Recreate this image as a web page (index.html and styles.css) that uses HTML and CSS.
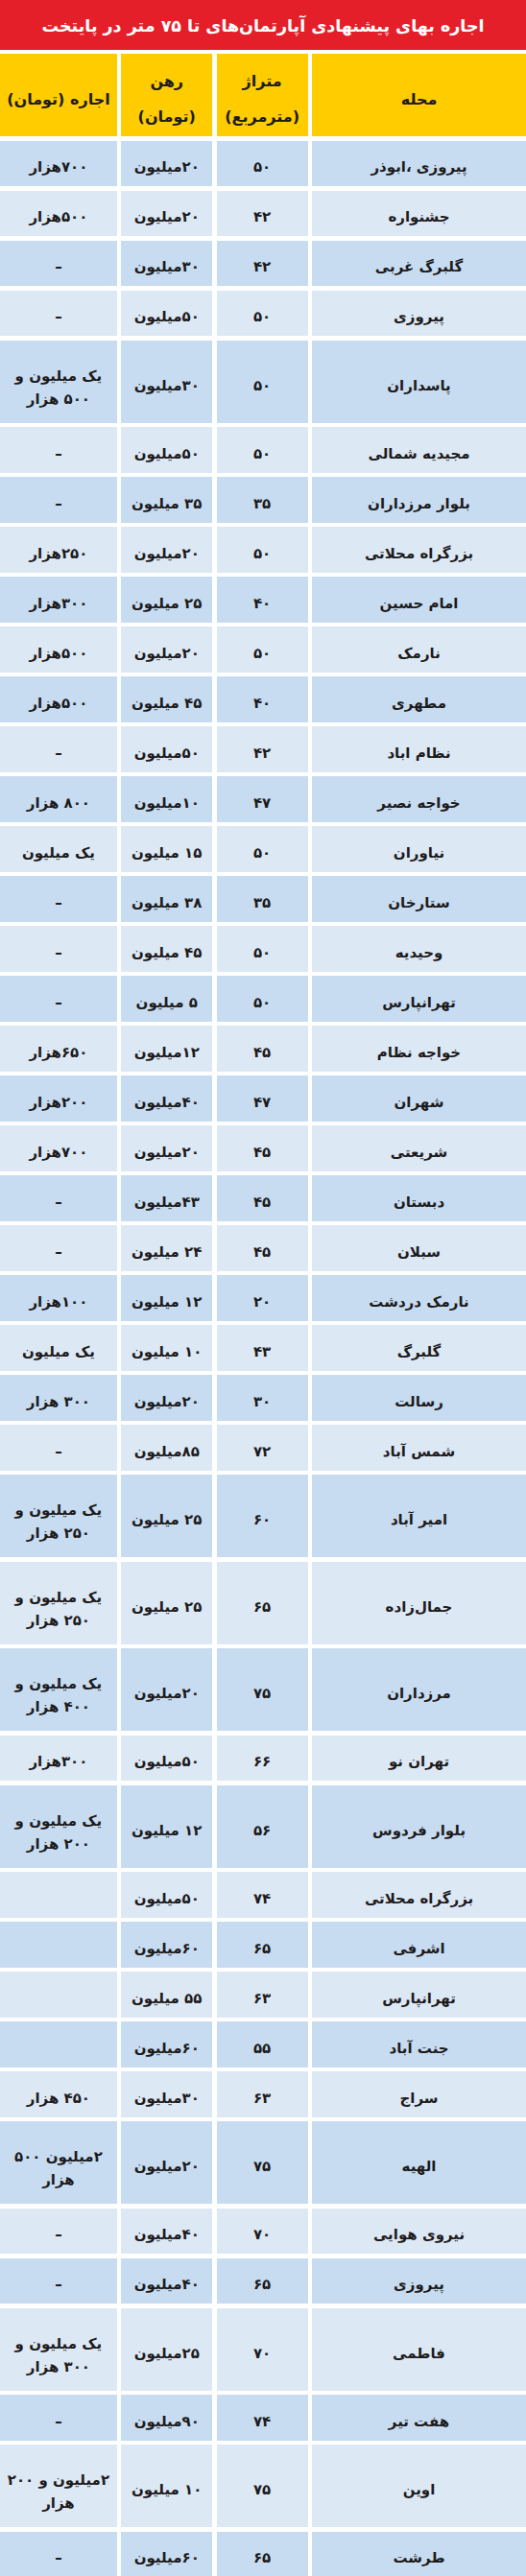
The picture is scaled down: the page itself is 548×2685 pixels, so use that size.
FILE: index.html
```html
<!DOCTYPE html>
<html lang="fa" dir="rtl">
<head>
<meta charset="utf-8">
<title>اجاره بهای پیشنهادی آپارتمان‌های تا ۷۵ متر در پایتخت</title>
<link rel="stylesheet" href="styles.css">
</head>
<body>
<div class="sheet">
  <h1 class="title">اجاره بهای پیشنهادی آپارتمان‌های تا ۷۵ متر در پایتخت</h1>
  <div class="head">
    <div class="hcell">محله</div>
    <div class="hcell">متراژ<br>(مترمربع)</div>
    <div class="hcell">رهن<br>(تومان)</div>
    <div class="hcell">اجاره (تومان)</div>
  </div>
  <div class="rows">
    <div class="row"><div class="cell">پیروزی ،ابوذر</div><div class="cell">۵۰</div><div class="cell">۲۰میلیون</div><div class="cell">۷۰۰هزار</div></div>
    <div class="row"><div class="cell">جشنواره</div><div class="cell">۴۲</div><div class="cell">۲۰میلیون</div><div class="cell">۵۰۰هزار</div></div>
    <div class="row"><div class="cell">گلبرگ غربی</div><div class="cell">۴۲</div><div class="cell">۳۰میلیون</div><div class="cell">–</div></div>
    <div class="row"><div class="cell">پیروزی</div><div class="cell">۵۰</div><div class="cell">۵۰میلیون</div><div class="cell">–</div></div>
    <div class="row tall"><div class="cell">پاسداران</div><div class="cell">۵۰</div><div class="cell">۳۰میلیون</div><div class="cell">یک میلیون و<br>۵۰۰ هزار</div></div>
    <div class="row"><div class="cell">مجیدیه شمالی</div><div class="cell">۵۰</div><div class="cell">۵۰میلیون</div><div class="cell">–</div></div>
    <div class="row"><div class="cell">بلوار مرزداران</div><div class="cell">۳۵</div><div class="cell">۳۵ میلیون</div><div class="cell">–</div></div>
    <div class="row"><div class="cell">بزرگراه محلاتی</div><div class="cell">۵۰</div><div class="cell">۲۰میلیون</div><div class="cell">۲۵۰هزار</div></div>
    <div class="row"><div class="cell">امام حسین</div><div class="cell">۴۰</div><div class="cell">۲۵ میلیون</div><div class="cell">۳۰۰هزار</div></div>
    <div class="row"><div class="cell">نارمک</div><div class="cell">۵۰</div><div class="cell">۲۰میلیون</div><div class="cell">۵۰۰هزار</div></div>
    <div class="row"><div class="cell">مطهری</div><div class="cell">۴۰</div><div class="cell">۴۵ میلیون</div><div class="cell">۵۰۰هزار</div></div>
    <div class="row"><div class="cell">نظام اباد</div><div class="cell">۴۲</div><div class="cell">۵۰میلیون</div><div class="cell">–</div></div>
    <div class="row"><div class="cell">خواجه نصیر</div><div class="cell">۴۷</div><div class="cell">۱۰میلیون</div><div class="cell">۸۰۰ هزار</div></div>
    <div class="row"><div class="cell">نیاوران</div><div class="cell">۵۰</div><div class="cell">۱۵ میلیون</div><div class="cell">یک میلیون</div></div>
    <div class="row"><div class="cell">ستارخان</div><div class="cell">۳۵</div><div class="cell">۳۸ میلیون</div><div class="cell">–</div></div>
    <div class="row"><div class="cell">وحیدیه</div><div class="cell">۵۰</div><div class="cell">۴۵ میلیون</div><div class="cell">–</div></div>
    <div class="row"><div class="cell">تهرانپارس</div><div class="cell">۵۰</div><div class="cell">۵ میلیون</div><div class="cell">–</div></div>
    <div class="row"><div class="cell">خواجه نظام</div><div class="cell">۴۵</div><div class="cell">۱۲میلیون</div><div class="cell">۶۵۰هزار</div></div>
    <div class="row"><div class="cell">شهران</div><div class="cell">۴۷</div><div class="cell">۴۰میلیون</div><div class="cell">۲۰۰هزار</div></div>
    <div class="row"><div class="cell">شریعتی</div><div class="cell">۴۵</div><div class="cell">۲۰میلیون</div><div class="cell">۷۰۰هزار</div></div>
    <div class="row"><div class="cell">دبستان</div><div class="cell">۴۵</div><div class="cell">۴۳میلیون</div><div class="cell">–</div></div>
    <div class="row"><div class="cell">سبلان</div><div class="cell">۴۵</div><div class="cell">۲۴ میلیون</div><div class="cell">–</div></div>
    <div class="row"><div class="cell">نارمک دردشت</div><div class="cell">۲۰</div><div class="cell">۱۲ میلیون</div><div class="cell">۱۰۰هزار</div></div>
    <div class="row"><div class="cell">گلبرگ</div><div class="cell">۴۳</div><div class="cell">۱۰ میلیون</div><div class="cell">یک میلیون</div></div>
    <div class="row"><div class="cell">رسالت</div><div class="cell">۳۰</div><div class="cell">۲۰میلیون</div><div class="cell">۳۰۰ هزار</div></div>
    <div class="row"><div class="cell">شمس آباد</div><div class="cell">۷۲</div><div class="cell">۸۵میلیون</div><div class="cell">–</div></div>
    <div class="row tall"><div class="cell">امیر آباد</div><div class="cell">۶۰</div><div class="cell">۲۵ میلیون</div><div class="cell">یک میلیون و<br>۲۵۰ هزار</div></div>
    <div class="row tall"><div class="cell">جمال‌زاده</div><div class="cell">۶۵</div><div class="cell">۲۵ میلیون</div><div class="cell">یک میلیون و<br>۲۵۰ هزار</div></div>
    <div class="row tall"><div class="cell">مرزداران</div><div class="cell">۷۵</div><div class="cell">۲۰میلیون</div><div class="cell">یک میلیون و<br>۴۰۰ هزار</div></div>
    <div class="row"><div class="cell">تهران نو</div><div class="cell">۶۶</div><div class="cell">۵۰میلیون</div><div class="cell">۳۰۰هزار</div></div>
    <div class="row tall"><div class="cell">بلوار فردوس</div><div class="cell">۵۶</div><div class="cell">۱۲ میلیون</div><div class="cell">یک میلیون و<br>۲۰۰ هزار</div></div>
    <div class="row"><div class="cell">بزرگراه محلاتی</div><div class="cell">۷۴</div><div class="cell">۵۰میلیون</div><div class="cell"></div></div>
    <div class="row"><div class="cell">اشرفی</div><div class="cell">۶۵</div><div class="cell">۶۰میلیون</div><div class="cell"></div></div>
    <div class="row"><div class="cell">تهرانپارس</div><div class="cell">۶۳</div><div class="cell">۵۵ میلیون</div><div class="cell"></div></div>
    <div class="row"><div class="cell">جنت آباد</div><div class="cell">۵۵</div><div class="cell">۶۰میلیون</div><div class="cell"></div></div>
    <div class="row"><div class="cell">سراج</div><div class="cell">۶۳</div><div class="cell">۳۰میلیون</div><div class="cell">۴۵۰ هزار</div></div>
    <div class="row tall"><div class="cell">الهیه</div><div class="cell">۷۵</div><div class="cell">۲۰میلیون</div><div class="cell">۲میلیون ۵۰۰<br>هزار</div></div>
    <div class="row"><div class="cell">نیروی هوایی</div><div class="cell">۷۰</div><div class="cell">۴۰میلیون</div><div class="cell">–</div></div>
    <div class="row"><div class="cell">پیروزی</div><div class="cell">۶۵</div><div class="cell">۴۰میلیون</div><div class="cell">–</div></div>
    <div class="row tall"><div class="cell">فاطمی</div><div class="cell">۷۰</div><div class="cell">۲۵میلیون</div><div class="cell">یک میلیون و<br>۳۰۰ هزار</div></div>
    <div class="row"><div class="cell">هفت تیر</div><div class="cell">۷۴</div><div class="cell">۹۰میلیون</div><div class="cell">–</div></div>
    <div class="row tall"><div class="cell">اوین</div><div class="cell">۷۵</div><div class="cell">۱۰ میلیون</div><div class="cell">۲میلیون و ۲۰۰<br>هزار</div></div>
    <div class="row"><div class="cell">طرشت</div><div class="cell">۶۵</div><div class="cell">۶۰میلیون</div><div class="cell">–</div></div>
  </div>
</div>
</body>
</html>
```
FILE: styles.css
```css
html, body {
  margin: 0;
  padding: 0;
  background: #ffffff;
}
.sheet {
  width: 548px;
  direction: rtl;
  font-family: "DejaVu Sans", "Noto Sans", sans-serif;
  font-weight: bold;
  color: #1d1b1c;
}
.title {
  margin: 0;
  height: 52px;
  background: #e51f2a;
  color: #ffffff;
  font-size: 17.5px;
  font-weight: bold;
  display: flex;
  align-items: center;
  justify-content: center;
  padding-top: 2px;
  box-sizing: border-box;
  white-space: nowrap;
}
.head,
.row {
  display: grid;
  grid-template-columns: 223px 95px 95px 1fr;
  column-gap: 4.4px;
}
.head {
  margin-top: 4px;
  height: 86px;
}
.hcell {
  background: #ffcc00;
  display: flex;
  align-items: center;
  justify-content: center;
  text-align: center;
  font-size: 16px;
  line-height: 37px;
  padding-top: 8px;
}
.rows {
  margin-top: 4.5px;
  display: flex;
  flex-direction: column;
  row-gap: 4.5px;
}
.row {
  height: 47.5px;
}
.row.tall {
  height: 86px;
}
.cell {
  display: flex;
  align-items: center;
  justify-content: center;
  text-align: center;
  font-size: 15px;
  line-height: 24px;
  padding-top: 8px;
  box-sizing: border-box;
  white-space: nowrap;
}
.row:nth-child(odd) .cell {
  background: #c7dcf1;
}
.row:nth-child(even) .cell {
  background: #dde8f5;
}
.row.tall .cell:last-child {
  padding-top: 12px;
}
```
